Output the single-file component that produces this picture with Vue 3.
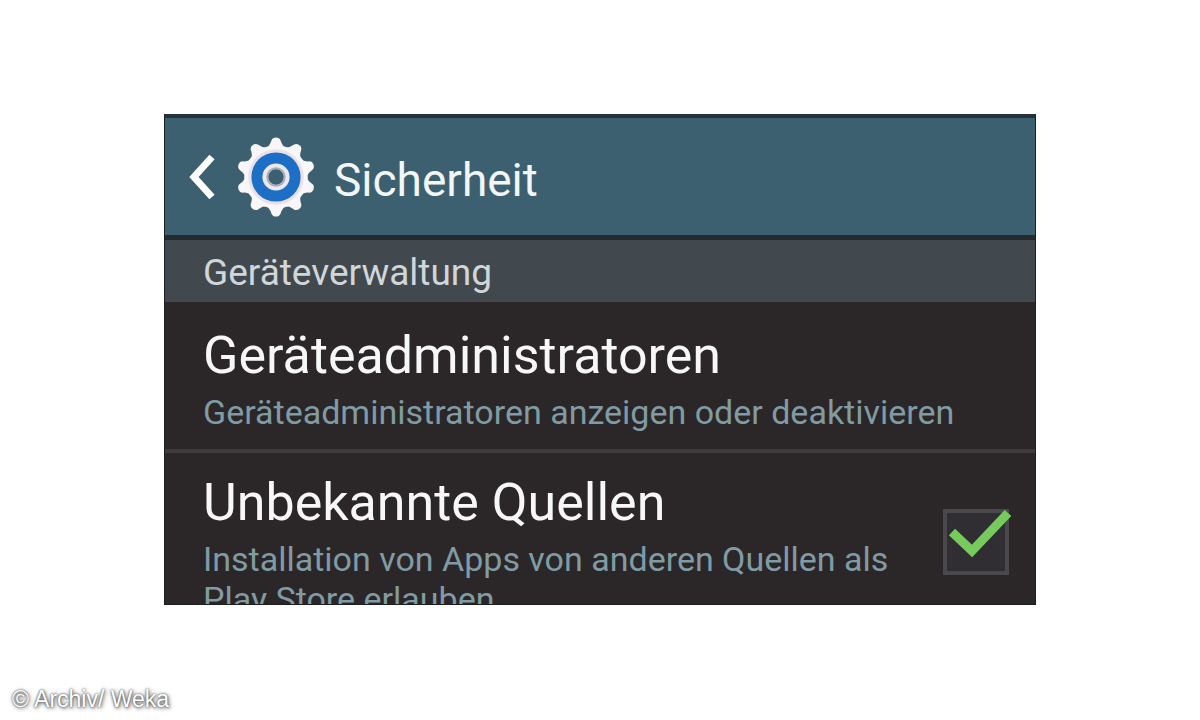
<script setup>
import { ref } from 'vue'

const unknownSources = ref(true)
const teeth = Array.from({ length: 10 }, (_, i) => i * 36)
</script>

<template>
  <div class="page">
    <main class="panel">
      <header class="bar">
        <button class="back" type="button" aria-label="Zurück">
          <svg width="28" height="48" viewBox="0 0 28 48" aria-hidden="true">
            <path d="M24 4 6 24 24 44" fill="none" stroke="#fff" stroke-width="7" />
          </svg>
        </button>
        <svg class="gear" width="80" height="80" viewBox="-39 -39 78 78" aria-hidden="true">
          <g fill="#f8f6f9">
            <path
              v-for="angle in teeth"
              :key="angle"
              d="M-11 -27 Q-6 -30 -4.5 -35.5 Q-3.5 -38.5 0 -38.5 Q3.5 -38.5 4.5 -35.5 Q6 -30 11 -27Z"
              :transform="`rotate(${angle})`"
            />
            <circle r="31" />
          </g>
          <circle r="27" fill="#e9e0e9" />
          <circle r="24" fill="#1d6fc6" />
          <circle r="10.5" fill="#3c6070" stroke="#eee9f1" stroke-width="5.5" />
          <circle r="8.5" fill="none" stroke="#a5adb8" stroke-width="2" />
        </svg>
        <h1>Sicherheit</h1>
      </header>
      <h2>Geräteverwaltung</h2>
      <a class="row" href="#">
        <span class="copy">
          <span class="title">Geräteadministratoren</span>
          <span class="note">Geräteadministratoren anzeigen oder deaktivieren</span>
        </span>
      </a>
      <label class="row" for="unknown">
        <span class="copy">
          <span class="title">Unbekannte Quellen</span>
          <span class="note">Installation von Apps von anderen Quellen als Play Store erlauben</span>
        </span>
        <span class="check">
          <input id="unknown" v-model="unknownSources" type="checkbox" />
          <svg v-if="unknownSources" class="tick" width="66" height="50" viewBox="0 0 66 50" aria-hidden="true">
            <path d="M5 23 25 42 61 4" fill="none" stroke="#77cb5c" stroke-width="9" />
          </svg>
        </span>
      </label>
    </main>
    <footer>© Archiv/ Weka</footer>
  </div>
</template>

<style>
body {
  margin: 0;
  background: #fff;
}
</style>

<style scoped>
.page {
  display: flex;
  flex-direction: column;
  box-sizing: border-box;
  height: 100vh;
  padding: 114px 164px 0;
  font-family: Roboto, "Liberation Sans", sans-serif;
}
.panel {
  flex: 1;
  min-height: 0;
  overflow: hidden;
  box-sizing: border-box;
  background: #2b2728;
  border: 1px solid #1c1e20;
  border-top: 4px solid #26333a;
}
.bar {
  display: flex;
  align-items: center;
  height: 117px;
  padding-left: 23px;
  background: #3c6070;
  border-bottom: 5px solid #272a2c;
}
.back {
  display: flex;
  padding: 0;
  border: 0;
  background: none;
}
.gear {
  margin-left: 20px;
}
h1 {
  margin: 6px 0 0 18px;
  font-size: 46px;
  line-height: 52px;
  font-weight: 400;
  color: #f2f6f8;
}
h2 {
  margin: 0;
  padding: 4px 38px 0;
  font-size: 37px;
  line-height: 58px;
  font-weight: 400;
  color: #d0d6d9;
  background: #41494f;
}
.row {
  display: flex;
  justify-content: space-between;
  gap: 24px;
  padding: 24px 26px 17px 38px;
  color: inherit;
  text-decoration: none;
}
.row + .row {
  padding-top: 20px;
  border-top: 4px solid #403c3e;
}
.copy {
  display: flex;
  flex-direction: column;
}
.title {
  font-size: 52px;
  line-height: 60px;
  color: #f7f7f7;
}
.note {
  margin-top: 6px;
  font-size: 34px;
  line-height: 40px;
  color: #809ba3;
}
.check {
  position: relative;
  flex: none;
  margin-top: 36px;
}
input {
  display: block;
  appearance: none;
  box-sizing: border-box;
  width: 66px;
  height: 66px;
  margin: 0;
  border: 4px solid #4a484d;
  background: #302e32;
}
.tick {
  position: absolute;
  top: 0;
  left: 4px;
}
footer {
  height: 115px;
  box-sizing: border-box;
  margin-left: -152px;
  padding-top: 81px;
  font-family: "Liberation Sans", Arial, sans-serif;
  font-size: 23px;
  line-height: 26px;
  color: #fff;
  text-shadow: 0 0 2px #333, 1px 1px 4px #444;
}
</style>
